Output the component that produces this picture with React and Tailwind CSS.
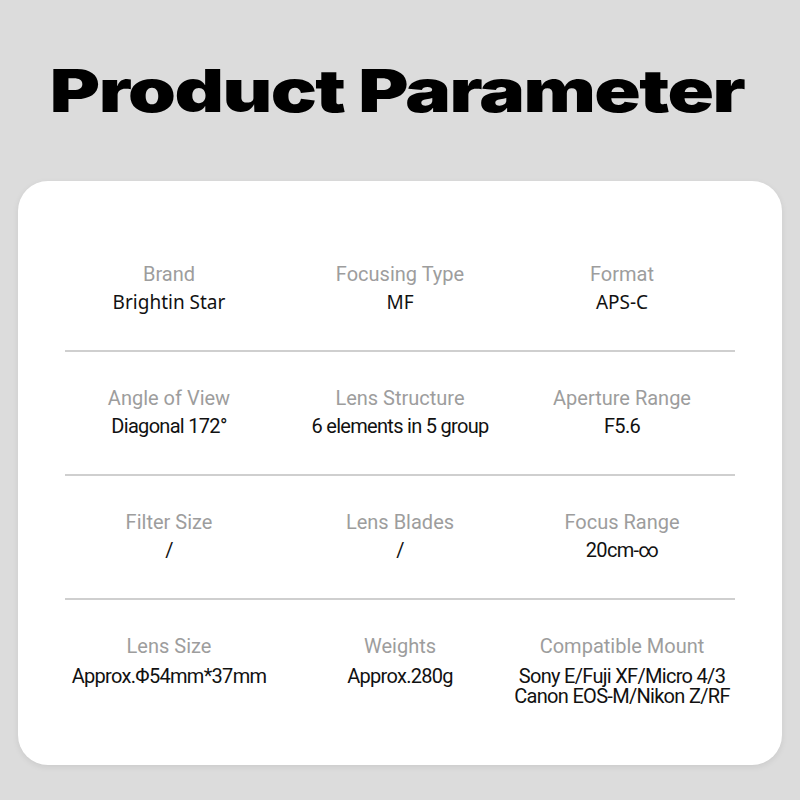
import React from "react";

const rows = [
  [
    ["Brand", "Brightin Star"],
    ["Focusing Type", "MF"],
    ["Format", "APS-C"],
  ],
  [
    ["Angle of View", "Diagonal 172°"],
    ["Lens Structure", "6 elements in 5 group"],
    ["Aperture Range", "F5.6"],
  ],
  [
    ["Filter Size", "/"],
    ["Lens Blades", "/"],
    ["Focus Range", "20cm-∞"],
  ],
  [
    ["Lens Size", "Approx.Φ54mm*37mm"],
    ["Weights", "Approx.280g"],
    ["Compatible Mount", "Sony E/Fuji XF/Micro 4/3\nCanon EOS-M/Nikon Z/RF"],
  ],
];

export default function App() {
  return (
    <div className="w-[800px] h-[800px] bg-[#dcdcdc] flex flex-col overflow-hidden">
      <div className="h-[181px] flex items-start justify-center pt-[46px] pr-[6px]">
        <h1
          className="text-[59px] leading-[90px] font-black text-black tracking-[-0.02em] scale-x-[1.3] whitespace-nowrap"
          style={{ fontFamily: "Inter, 'Liberation Sans', sans-serif" }}
        >
          Product Parameter
        </h1>
      </div>
      <div className="mx-[18px] h-[584px] rounded-[30px] bg-white shadow-[0_2px_6px_rgba(0,0,0,0.08)] pt-[47px] px-[47px]">
        {rows.map((row, i) => (
          <div key={i}>
            {i > 0 && <div className="h-[2px] bg-[#cfcfcf]" />}
            <div
              className="grid grid-cols-[208px_254px_190px] pt-[32px] pb-[38px]"
              style={{ fontFamily: "Roboto, 'Noto Sans', sans-serif" }}
            >
              {row.map(([label, value], j) => (
                <div key={j} className="flex flex-col items-center text-center">
                  <div className="text-[20px] leading-[28px] text-[#9d9d9d] font-normal whitespace-nowrap">
                    {label}
                  </div>
                  {i === 0 ? (
                    <div
                      className="mt-[4px] text-[19px] leading-[20px] text-[#111] whitespace-pre"
                      style={{ fontFamily: "'Noto Sans', Roboto, sans-serif" }}
                    >
                      {value}
                    </div>
                  ) : (
                    <div
                      className={
                        "text-[20px] leading-[20px] text-[#111] whitespace-pre tracking-[-0.035em] " +
                        (i === 3 ? "mt-[6px]" : "mt-[4px]")
                      }
                    >
                      {value}
                    </div>
                  )}
                </div>
              ))}
            </div>
          </div>
        ))}
      </div>
    </div>
  );
}
